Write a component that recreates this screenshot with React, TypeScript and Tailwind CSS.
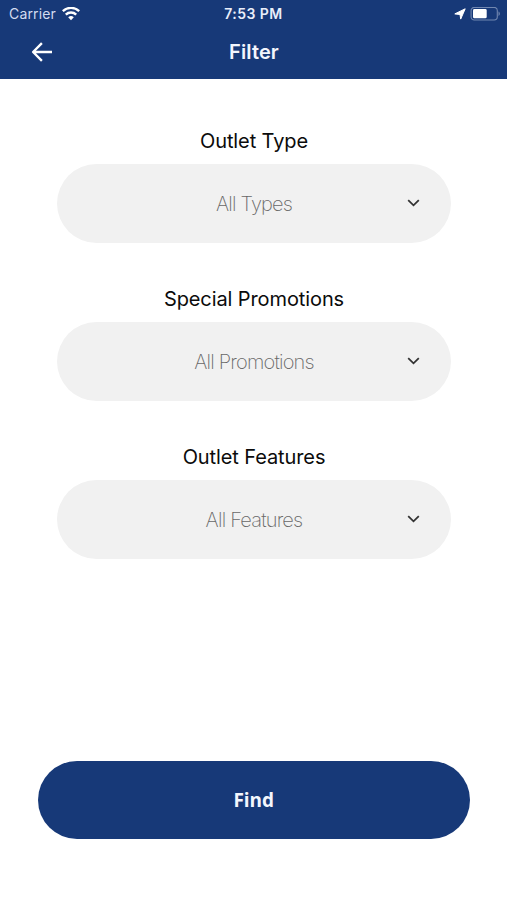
import React from 'react';

interface FilterFieldProps {
  label: string;
  value: string;
}

const filters: FilterFieldProps[] = [
  { label: 'Outlet Type', value: 'All Types' },
  { label: 'Special Promotions', value: 'All Promotions' },
  { label: 'Outlet Features', value: 'All Features' },
];

const StatusBar: React.FC = () => {
  return (
    <div className="grid h-[27px] grid-cols-3 items-center pl-[9px] pr-[7px] text-[14px] leading-none text-[#e9eefa]">
      <div className="flex items-center gap-[6px]">
        <span className="tracking-[0.15px] text-[#d3dcf0]">Carrier</span>
        <svg className="h-[14px] w-[18px]" viewBox="0 0 18 14" fill="none" stroke="white" strokeWidth="2.4" aria-hidden="true">
          <path d="M.8 4.2a11.8 11.8 0 0 1 16.4 0" />
          <path d="M3.8 7.6a7.5 7.5 0 0 1 10.4 0" />
          <path d="M9 13.2 6.2 10.3a4.1 4.1 0 0 1 5.6 0Z" fill="white" stroke="none" />
        </svg>
      </div>
      <span className="whitespace-nowrap pr-[2px] pt-px text-center font-semibold tracking-[0.45px]">7:53 PM</span>
      <div className="flex items-center justify-end gap-[4px]">
        <svg className="h-3 w-3" viewBox="0 0 12 12" fill="white" stroke="white" strokeWidth="1" strokeLinejoin="round" aria-hidden="true">
          <path d="M11.2.8 6.7 11.1 6 6.5.8 5.9Z" />
        </svg>
        <svg className="h-[14px] w-[30px]" viewBox="0 0 30 14" aria-hidden="true">
          <rect x="1.1" y=".4" width="26.2" height="12.6" rx="3.2" fill="none" stroke="#7187b0" strokeWidth="1.1" />
          <rect x="3" y="2.1" width="13.7" height="9.2" rx="1.4" fill="white" />
          <path d="M28.5 4.6c1.8.7 1.8 3.7 0 4.4Z" fill="#7187b0" />
        </svg>
      </div>
    </div>
  );
};

const FilterField: React.FC<FilterFieldProps> = ({ label, value }) => {
  return (
    <div>
      <h2 className="flex h-[30px] items-center justify-center text-[20px] tracking-[-0.1px] text-[#0b0b0b]">{label}</h2>
      <button className="mt-[8px] grid h-[79px] w-full grid-cols-[1fr_auto_1fr] items-center rounded-full bg-[#f1f1f1] px-[31px]">
        <span />
        <span className="text-[20px] font-extralight tracking-[-0.8px] text-[#686868]">{value}</span>
        <svg className="mb-px h-[8px] w-[13px] justify-self-end" viewBox="0 0 13 8" fill="none" stroke="#333" strokeWidth="1.8" aria-hidden="true">
          <path d="m1.2 1.2 5.3 5.1 5.3-5.1" />
        </svg>
      </button>
    </div>
  );
};

const App: React.FC = () => {
  return (
    <div className="flex h-[900px] w-[507px] flex-col bg-white font-['Inter','Liberation_Sans',sans-serif]">
      <header className="h-[79px] bg-[#173978]">
        <StatusBar />
        <div className="grid h-[50px] grid-cols-3 items-center px-[31px]">
          <button aria-label="Back">
            <svg className="h-[20px] w-[22px]" viewBox="0 0 22 20" fill="none" stroke="white" strokeWidth="2.4" strokeLinejoin="round" aria-hidden="true">
              <path d="M21 10H2M10.9 1.2 2.1 10l8.8 8.8" />
            </svg>
          </button>
          <h1 className="pl-px text-center text-[20px] font-semibold tracking-[0.1px] text-[#f3f6fd]">Filter</h1>
        </div>
      </header>

      <main className="flex flex-col gap-[41px] pl-[57px] pr-[56px] pt-[47px]">
        {filters.map((filter) => (
          <FilterField key={filter.label} label={filter.label} value={filter.value} />
        ))}
      </main>

      <footer className="mt-auto pb-[61px] pl-[37.5px] pr-[37px]">
        <button className="h-[78px] w-full rounded-full bg-[#173978] font-['Open_Sans','Noto_Sans',sans-serif] text-[19px] font-bold text-[#f3f6fd]">Find</button>
      </footer>
    </div>
  );
};

export default App;
